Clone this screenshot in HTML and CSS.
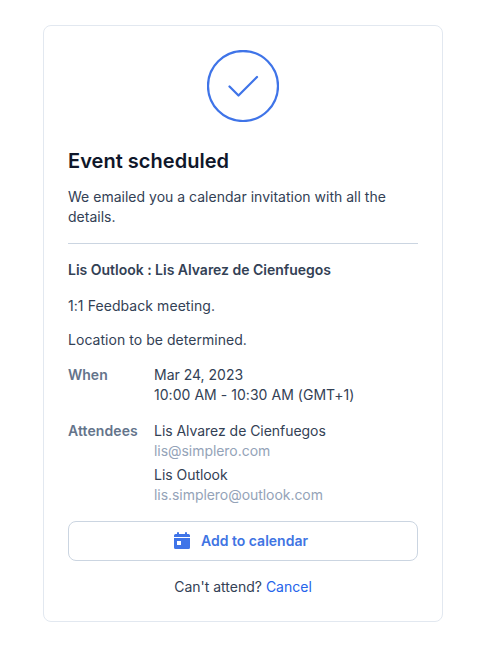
FILE: index.html
```html
<!DOCTYPE html>
<html lang="en">
<head>
    <meta charset="UTF-8">
    <meta name="viewport" content="width=device-width, initial-scale=1.0">
    <title>Event scheduled</title>
    <link rel="stylesheet" href="styles.css">
</head>
<body>
    <div class="card">
        <svg class="success-icon" width="72" height="72" viewBox="0 0 72 72" fill="none">
            <circle cx="36" cy="36" r="35"/>
            <path d="M22.500 36.500l9 9L50 27"/>
        </svg>
        <h1>Event scheduled</h1>
        <p class="intro">We emailed you a calendar invitation with all the details.</p>
        <hr>
        <h2>Lis Outlook : Lis Alvarez de Cienfuegos</h2>
        <p class="description">1:1 Feedback meeting.</p>
        <p class="location">Location to be determined.</p>
        <dl class="details">
            <dt>When</dt>
            <dd>
                <div>Mar 24, 2023</div>
                <div class="time">10:00 AM - 10:30 AM (GMT+1)</div>
            </dd>
            <dt class="attendees-label">Attendees</dt>
            <dd>
                <div class="attendee">
                    <div class="name">Lis Alvarez de Cienfuegos</div>
                    <div class="email">lis@simplero.com</div>
                </div>
                <div class="attendee">
                    <div class="name">Lis Outlook</div>
                    <div class="email">lis.simplero@outlook.com</div>
                </div>
            </dd>
        </dl>
        <button type="button" class="add-button">
            <svg width="16" height="18" viewBox="0 0 16 18">
                <path fill-rule="evenodd" d="M3 1a1 1 0 0 1 2 0v1h6V1a1 1 0 0 1 2 0v1h1.500A1.500 1.500 0 0 1 16 3.500V5H0V3.500A1.500 1.500 0 0 1 1.500 2H3zM0 6h16v9.500a1.500 1.500 0 0 1-1.500 1.500h-13A1.500 1.500 0 0 1 0 15.500zM3 9v4h4V9z"/>
            </svg>
            Add to calendar
        </button>
        <p class="cancel">Can't attend? <a href="#">Cancel</a></p>
    </div>
</body>
</html>
```

FILE: styles.css
```css
* {
    box-sizing: border-box;
}
body {
    margin: 0;
    padding: 25px 0 0 43px;
    background-color: #fff;
    font-family: Inter, sans-serif;
    font-size: 14px;
    line-height: 20px;
    color: #334155;
}
h1, h2, p, dl, dd {
    margin: 0;
}
.card {
    width: 400px;
    height: 597px;
    padding: 24px;
    border: 1px solid #e2e8f0;
    border-radius: 8px;
}
.success-icon {
    display: block;
    margin: 0 auto 25px;
    stroke: #3f74e8;
    stroke-width: 2.25;
    stroke-linecap: round;
    stroke-linejoin: round;
}
h1 {
    font-size: 20px;
    line-height: 28px;
    font-weight: 600;
    letter-spacing: 0.03px;
    color: #0f172a;
}
.intro {
    margin-top: 12px;
    letter-spacing: 0.01px;
}
hr {
    margin: 16px 0;
    border: 0;
    border-top: 1px solid #cbd5e1;
}
h2 {
    font-size: 14px;
    line-height: 20px;
    font-weight: 600;
    letter-spacing: -0.015px;
}
.description {
    margin-top: 16px;
    letter-spacing: 0.07px;
}
.location {
    margin-top: 14px;
    letter-spacing: 0.04px;
}
.details {
    display: grid;
    grid-template-columns: 70px 1fr;
    gap: 16px;
    margin-top: 15px;
}
dt {
    font-weight: 600;
    color: #64748b;
}
.attendees-label {
    letter-spacing: 0.1px;
}
.time {
    letter-spacing: 0.04px;
}
.attendee + .attendee {
    margin-top: 4px;
}
.name {
    letter-spacing: -0.04px;
}
.email {
    letter-spacing: -0.05px;
    color: #94a3b8;
}
.add-button {
    display: flex;
    justify-content: center;
    align-items: center;
    gap: 11px;
    width: 100%;
    height: 40px;
    margin-top: 16px;
    padding: 0 10px 0 6px;
    border: 1px solid #cbd5e1;
    border-radius: 8px;
    background-color: #fff;
    font: inherit;
    font-weight: 600;
    color: #4074e3;
    cursor: pointer;
}
.add-button svg {
    fill: #3f74e8;
}
.cancel {
    margin-top: 16px;
    text-align: center;
}
.cancel a {
    color: #2563eb;
    text-decoration: none;
}
```
